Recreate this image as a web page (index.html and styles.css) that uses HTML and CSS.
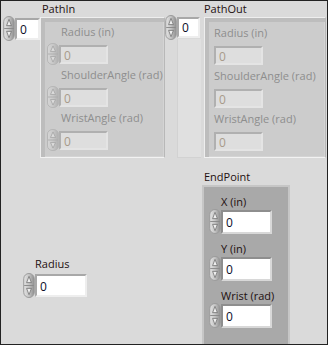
FILE: index.html
```html
<!DOCTYPE html>
<html>
<head>
<title>Arm Panel</title>
<meta name="viewport" content="width=device-width">
<link rel="stylesheet" href="styles.css">
</head>

<body>
<div class="panel">

  <!-- PathIn control -->
  <div class="ctl num" id="path-in-num">
    <svg class="spin" viewBox="0 0 12 26"><use href="#spinner"/></svg>
    <div class="field small">0</div>
  </div>
  <div class="ctl label" id="path-in-label">PathIn</div>
  <div class="ctl cluster dim" id="path-in">
    <div class="item">
      <div class="item-label">Radius (in)</div>
      <div class="num">
        <svg class="spin" viewBox="0 0 12 26" preserveAspectRatio="none"><use href="#spinner"/></svg>
        <div class="field">0</div>
      </div>
    </div>
    <div class="item">
      <div class="item-label">ShoulderAngle (rad)</div>
      <div class="num">
        <svg class="spin" viewBox="0 0 12 26" preserveAspectRatio="none"><use href="#spinner"/></svg>
        <div class="field">0</div>
      </div>
    </div>
    <div class="item">
      <div class="item-label">WristAngle (rad)</div>
      <div class="num">
        <svg class="spin" viewBox="0 0 12 26" preserveAspectRatio="none"><use href="#spinner"/></svg>
        <div class="field">0</div>
      </div>
    </div>
  </div>

  <!-- PathOut indicator -->
  <div class="ctl num" id="path-out-num">
    <svg class="spin" viewBox="0 0 12 26"><use href="#spinner"/></svg>
    <div class="field small">0</div>
  </div>
  <div class="ctl strip" id="path-out-strip"></div>
  <div class="ctl label" id="path-out-label">PathOut</div>
  <div class="ctl cluster dim" id="path-out">
    <div class="item">
      <div class="item-label">Radius (in)</div>
      <div class="field">0</div>
    </div>
    <div class="item">
      <div class="item-label">ShoulderAngle (rad)</div>
      <div class="field">0</div>
    </div>
    <div class="item">
      <div class="item-label">WristAngle (rad)</div>
      <div class="field">0</div>
    </div>
  </div>

  <!-- EndPoint -->
  <div class="ctl label" id="end-label">EndPoint</div>
  <div class="ctl cluster dark" id="end-point">
    <div class="item">
      <div class="item-label">X (in)</div>
      <div class="num">
        <svg class="spin" viewBox="0 0 12 26"><use href="#spinner"/></svg>
        <div class="field">0</div>
      </div>
    </div>
    <div class="item">
      <div class="item-label">Y (in)</div>
      <div class="num">
        <svg class="spin" viewBox="0 0 12 26"><use href="#spinner"/></svg>
        <div class="field">0</div>
      </div>
    </div>
    <div class="item">
      <div class="item-label">Wrist (rad)</div>
      <div class="num">
        <svg class="spin" viewBox="0 0 12 26"><use href="#spinner"/></svg>
        <div class="field">0</div>
      </div>
    </div>
  </div>

  <!-- Radius -->
  <div class="ctl label" id="radius-label">Radius</div>
  <div class="ctl num" id="radius-num">
    <svg class="spin" viewBox="0 0 12 26"><use href="#spinner"/></svg>
    <div class="field">0</div>
  </div>

</div>

<svg width="0" height="0" style="position:absolute">
  <defs>
    <linearGradient id="spin-grad" x1="0" y1="0" x2="1" y2="0">
      <stop offset="0" stop-color="#e4e4e4"/>
      <stop offset="0.5" stop-color="#c4c4c4"/>
      <stop offset="1" stop-color="#8e8e8e"/>
    </linearGradient>
    <g id="spinner">
      <rect x="0.5" y="0.5" width="11" height="25" rx="5.5" fill="url(#spin-grad)" stroke="#9a9a9a"/>
      <line x1="1" y1="13" x2="11" y2="13" stroke="#8a8a8a"/>
      <path d="M6 3.5 L3.5 10 L8.5 10 Z" fill="#eeeeee" stroke="#6e6e6e" stroke-width="0.8"/>
      <path d="M6 22.5 L3.5 16 L8.5 16 Z" fill="#eeeeee" stroke="#6e6e6e" stroke-width="0.8"/>
    </g>
  </defs>
</svg>
</body>
</html>
```

FILE: styles.css
```css
body {
  margin: 0;
  font-family: "Open Sans", "Liberation Sans", sans-serif;
  font-size: 11px;
}

.panel {
  position: relative;
  width: 328px;
  height: 345px;
  box-sizing: border-box;
  border: 1px solid #222;
  background: #dadada;
  overflow: hidden;
}

/* every object sits at its own spot on the front panel */
.ctl {
  position: absolute;
}

.label {
  color: #1e1010;
  line-height: 14px;
}

.num {
  display: flex;
  align-items: center;
}

.spin {
  width: 12px;
  height: 25px;
  flex: none;
}

.field {
  box-sizing: border-box;
  width: 49px;
  height: 20px;
  padding: 1px 0 0 3px;
  background: #fff;
  border: 2px solid;
  border-color: #a8a8a8 #eeeeee #eeeeee #a8a8a8;
  color: #0c0c28;
  font-size: 12px;
  line-height: 15px;
}

.field.small {
  width: 25px;
}

.cluster {
  box-sizing: border-box;
  display: flex;
  flex-direction: column;
  border: 1px solid;
  border-color: #eeeeee #b8b8b8 #f2f2f2 #eeeeee;
}

.item-label {
  line-height: 14px;
}

/* greyed-out clusters */
.dim {
  background: #cccccc;
  box-shadow: inset 4px 4px 0 #bdbdbd, inset -1px -1px 0 #d4d4d4;
  padding: 7px 0 0 6px;
  gap: 3px;
}

.dim .item {
  display: flex;
  flex-direction: column;
  gap: 4px;
}

.dim .item-label {
  color: #8e8e8e;
  margin-left: 14px;
}

.dim .field {
  background: #dedede;
  border-color: #b0b0b0 #e4e4e4 #e4e4e4 #b0b0b0;
  color: #a89a8a;
  height: 19px;
  width: 49px;
}

.dim .spin {
  opacity: 0.45;
  height: 22px;
}

#path-out {
  padding-top: 8px;
  gap: 4px;
}

#path-out .item {
  gap: 6px;
}

#path-out .item-label {
  margin-left: 3px;
}

#path-out .field {
  margin-left: 3px;
}

.dark {
  background: #a9a9a9;
  border-color: #c6c6c6;
  border-width: 2px;
  padding: 8px 0 0 5px;
  gap: 8px;
}

.dark .item {
  display: flex;
  flex-direction: column;
}

.dark .item-label {
  color: #1e1010;
  margin-left: 12px;
}

.dark .field {
  width: 51px;
  height: 24px;
  border-color: #8e8e8e #d8d8d8 #d8d8d8 #8e8e8e;
  padding-top: 3px;
}

.strip {
  background: #e0e0e0;
  border-left: 1px solid #d2d2d2;
  border-bottom: 1px solid #d2d2d2;
  box-sizing: border-box;
}

#path-in-num { left: 2px; top: 15px; }
#path-in-num .field { height: 22px; padding-top: 2px; }
#path-in-label { left: 41px; top: 1px; }
#path-in { left: 39px; top: 16px; width: 125px; height: 141px; }

#path-out-num { left: 164px; top: 14px; }
#path-out-num .field { width: 23px; height: 21px; }
#path-out-strip { left: 176px; top: 38px; width: 24px; height: 119px; }
#path-out-label { left: 203px; top: 1px; }
#path-out { left: 203px; top: 16px; width: 122px; height: 141px; }

#end-label { left: 203px; top: 169px; }
#end-point { left: 201px; top: 184px; width: 88px; height: 170px; }

#radius-label { left: 34px; top: 256px; }
#radius-num { left: 22px; top: 272px; }
#radius-num .field { width: 52px; height: 23px; padding-top: 3px; }
```
